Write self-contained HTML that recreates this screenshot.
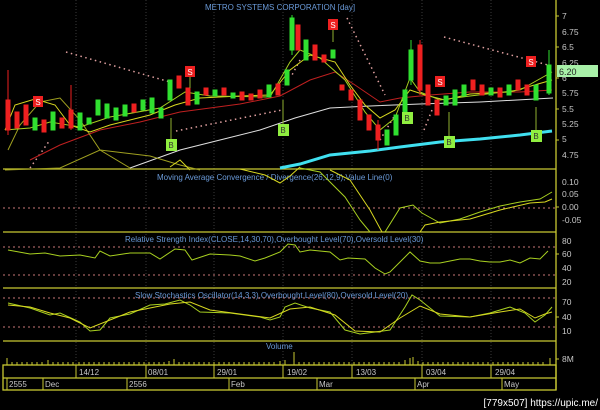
<!DOCTYPE html>
<html><head><style>
html,body{margin:0;padding:0;background:#000;width:600px;height:410px;overflow:hidden}
svg{display:block}
text{font-family:"Liberation Sans",sans-serif}
</style></head><body>
<svg width="600" height="410" viewBox="0 0 600 410" xmlns="http://www.w3.org/2000/svg">
<rect width="600" height="410" fill="#000"/>
<!-- vertical grid -->
<g stroke="#3a3a3a" stroke-width="1" stroke-dasharray="1,2">
<line x1="76" y1="0" x2="76" y2="365"/><line x1="146" y1="0" x2="146" y2="365"/><line x1="214" y1="0" x2="214" y2="365"/><line x1="283" y1="0" x2="283" y2="365"/><line x1="352" y1="0" x2="352" y2="365"/><line x1="422" y1="0" x2="422" y2="365"/><line x1="491" y1="0" x2="491" y2="365"/>
</g>
<!-- panel borders -->
<g stroke="#c8c832" stroke-width="1.3" fill="none">
<line x1="3" y1="169" x2="556" y2="169"/><line x1="3" y1="232" x2="556" y2="232"/><line x1="3" y1="288" x2="556" y2="288"/><line x1="3" y1="341" x2="556" y2="341"/>
<line x1="556" y1="0" x2="556" y2="390"/>
<rect x="3" y="365" width="553" height="25"/>
<line x1="3" y1="378" x2="556" y2="378"/>
</g>
<!-- date dividers -->
<g stroke="#c8c832" stroke-width="1">
<line x1="76" y1="365" x2="76" y2="378"/><line x1="146" y1="365" x2="146" y2="378"/><line x1="214" y1="365" x2="214" y2="378"/><line x1="283" y1="365" x2="283" y2="378"/><line x1="352" y1="365" x2="352" y2="378"/><line x1="422" y1="365" x2="422" y2="378"/><line x1="491" y1="365" x2="491" y2="378"/>
<line x1="7" y1="378" x2="7" y2="390"/><line x1="43" y1="378" x2="43" y2="390"/><line x1="127" y1="378" x2="127" y2="390"/><line x1="229" y1="378" x2="229" y2="390"/><line x1="317" y1="378" x2="317" y2="390"/><line x1="415" y1="378" x2="415" y2="390"/><line x1="502" y1="378" x2="502" y2="390"/>
</g>
<g fill="#c8c8c8" font-size="8">
<text x="79" y="375">14/12</text><text x="148" y="375">08/01</text><text x="217" y="375">29/01</text><text x="287" y="375">19/02</text><text x="356" y="375">13/03</text><text x="426" y="375">03/04</text><text x="495" y="375">29/04</text>
<text x="9" y="387">2555</text><text x="45" y="387">Dec</text><text x="129" y="387">2556</text><text x="231" y="387">Feb</text><text x="319" y="387">Mar</text><text x="417" y="387">Apr</text><text x="504" y="387">May</text>
</g>
<!-- right axis labels -->
<g fill="#c8c8c8" font-size="8.5">
<text x="562" y="19">7</text><text x="562" y="35">6.75</text><text x="562" y="50">6.5</text><text x="562" y="66">6.25</text><text x="562" y="81">6</text><text x="562" y="96">5.75</text><text x="562" y="112">5.5</text><text x="562" y="127">5.25</text><text x="562" y="142">5</text><text x="562" y="158">4.75</text>
<text x="562" y="185">0.10</text><text x="562" y="197">0.05</text><text x="562" y="210">0.00</text><text x="562" y="223">-0.05</text>
<text x="562" y="244">80</text><text x="562" y="257">60</text><text x="562" y="271">40</text><text x="562" y="285">20</text>
<text x="562" y="305">70</text><text x="562" y="320">40</text><text x="562" y="334">10</text>
<text x="562" y="362">8M</text>
</g>
<g stroke="#c8c832"><line x1="556" y1="16" x2="559" y2="16"/><line x1="556" y1="47" x2="559" y2="47"/><line x1="556" y1="78" x2="559" y2="78"/><line x1="556" y1="109" x2="559" y2="109"/><line x1="556" y1="140" x2="559" y2="140"/><line x1="556" y1="207" x2="559" y2="207"/><line x1="556" y1="254" x2="559" y2="254"/><line x1="556" y1="317" x2="559" y2="317"/><line x1="556" y1="359" x2="559" y2="359"/></g>
<rect x="557" y="65" width="41" height="12" fill="#a8f0a8"/>
<text x="559" y="75" font-size="9" fill="#222">6.20</text>
<!-- titles -->
<g fill="#6a9ad8" font-size="8">
<text x="205" y="10">METRO SYSTEMS CORPORATION [day]</text>
<text x="157" y="180">Moving Average Convergence / Divergence(26,12,9),Value Line(0)</text>
<text x="125" y="242">Relative Strength Index(CLOSE,14,30,70),Overbought Level(70),Oversold Level(30)</text>
<text x="135" y="298">Slow Stochastics Oscillator(14,3,3),Overbought Level(80),Oversold Level(20)</text>
<text x="266" y="349">Volume</text>
</g>
<!-- dashed levels -->
<g stroke="#c87878" stroke-dasharray="2,3" stroke-width="1">
<line x1="3" y1="208" x2="556" y2="208"/><line x1="3" y1="247" x2="556" y2="247"/><line x1="3" y1="275" x2="556" y2="275"/><line x1="3" y1="298" x2="556" y2="298"/><line x1="3" y1="327" x2="556" y2="327"/>
</g>
<!-- SAR dots -->
<g stroke="#e0a0a0" stroke-width="1.5" stroke-dasharray="1.5,3.5" fill="none">
<path d="M66 52 L170 82"/><path d="M176 131 L282 110"/><path d="M30 168 L50 140"/><path d="M347 18 L385 95"/><path d="M300 60 L292 75"/><path d="M444 37 L548 65"/><path d="M380 140 L395 115"/><path d="M424 130 L432 110"/>
</g>
<!-- MAs -->
<g fill="none" stroke-width="1">
<path d="M30 160 L60 145 L100 130 L140 122 L180 112 L240 104 L280 96 L310 80 L335 72 L355 85 L380 102 L400 98 L430 95 L470 92 L520 92 L552 90" stroke="#c02020"/>
<path d="M130 168 L180 150 L220 140 L260 130 L295 118 L330 108 L370 106 L420 104 L480 102 L553 98" stroke="#e0e0e0"/>
<path d="M8 150 L20 125 L40 102 L60 98 L80 120 L100 150 L130 168" stroke="#a0a020"/>
<path d="M5 130 L15 105 L35 99 L55 105 L70 125 L90 132 L110 125 L150 115 L175 105 L200 98 L240 96 L270 95 L290 70 L310 55 L335 62 L350 85 L365 105 L380 118 L395 110 L410 90 L425 95 L445 100 L470 94 L510 92 L552 80" stroke="#d8d820"/>
<path d="M5 130 L30 128 L50 122 L80 127 L110 117 L160 108 L185 92 L210 96 L270 97 L290 62 L300 50 L320 58 L345 80 L365 112 L380 130 L395 118 L410 78 L420 92 L440 100 L470 96 L520 90 L552 72" stroke="#a8d020"/>
</g>
<path d="M280 168 L300 164 L330 155 L370 151 L400 147 L440 142 L480 139 L520 135 L552 131" stroke="#40e0f0" stroke-width="3" fill="none"/>
<!-- candles -->
<g stroke-width="1">
<g fill="#ee2020" stroke="#ee2020">
<line x1="8" y1="70" x2="8" y2="135"/><rect x="6" y="100" width="4" height="30"/>
<rect x="15" y="112" width="4" height="16"/><rect x="24" y="105" width="4" height="20"/>
<rect x="42" y="120" width="4" height="12"/><rect x="60" y="118" width="4" height="10"/>
<line x1="71" y1="85" x2="71" y2="130"/><rect x="69" y="110" width="4" height="18"/>
<rect x="132" y="104" width="4" height="8"/><rect x="177" y="76" width="4" height="12"/>
<rect x="186" y="88" width="4" height="17"/><rect x="204" y="88" width="4" height="7"/>
<rect x="222" y="88" width="4" height="7"/><rect x="240" y="92" width="4" height="8"/>
<rect x="249" y="94" width="4" height="6"/><rect x="258" y="90" width="4" height="8"/>
<rect x="276" y="84" width="4" height="11"/><rect x="296" y="25" width="4" height="25"/>
<rect x="313" y="45" width="4" height="15"/><rect x="322" y="55" width="4" height="7"/>
<rect x="340" y="85" width="4" height="5"/><rect x="349" y="90" width="4" height="10"/>
<rect x="358" y="100" width="4" height="20"/><rect x="367" y="115" width="4" height="15"/>
<line x1="378" y1="120" x2="378" y2="150"/><rect x="376" y="125" width="4" height="15"/>
<line x1="420" y1="40" x2="420" y2="95"/><rect x="418" y="45" width="4" height="45"/>
<rect x="426" y="85" width="4" height="20"/><rect x="435" y="100" width="4" height="15"/>
<rect x="471" y="80" width="4" height="10"/><rect x="480" y="85" width="4" height="10"/>
<rect x="498" y="88" width="4" height="9"/><rect x="516" y="80" width="4" height="10"/>
<rect x="525" y="85" width="4" height="10"/>
</g>
<g fill="#30e030" stroke="#30e030">
<rect x="33" y="118" width="4" height="12"/><rect x="51" y="112" width="4" height="18"/>
<rect x="78" y="113" width="4" height="17"/><rect x="87" y="118" width="4" height="6"/>
<rect x="96" y="100" width="4" height="15"/><rect x="105" y="104" width="4" height="14"/>
<rect x="114" y="108" width="4" height="12"/><rect x="123" y="105" width="4" height="11"/>
<rect x="141" y="100" width="4" height="10"/><rect x="150" y="98" width="4" height="15"/>
<rect x="159" y="108" width="4" height="10"/><rect x="168" y="80" width="4" height="20"/>
<rect x="195" y="92" width="4" height="12"/><rect x="213" y="90" width="4" height="6"/>
<rect x="231" y="93" width="4" height="5"/><rect x="267" y="85" width="4" height="12"/>
<rect x="285" y="70" width="4" height="15"/><line x1="292" y1="15" x2="292" y2="55"/><rect x="290" y="18" width="4" height="32"/>
<rect x="304" y="40" width="4" height="20"/><rect x="331" y="50" width="4" height="8"/>
<rect x="385" y="130" width="4" height="15"/><rect x="394" y="115" width="4" height="20"/>
<rect x="403" y="90" width="4" height="25"/><line x1="411" y1="40" x2="411" y2="85"/><rect x="409" y="50" width="4" height="30"/>
<rect x="444" y="96" width="4" height="9"/><rect x="453" y="90" width="4" height="15"/>
<rect x="462" y="85" width="4" height="11"/><rect x="489" y="88" width="4" height="7"/>
<rect x="507" y="85" width="4" height="10"/><rect x="534" y="85" width="4" height="15"/>
<line x1="549" y1="50" x2="549" y2="95"/><rect x="547" y="65" width="4" height="28"/>
</g>
</g>
<!-- signals -->
<g stroke="#90b030" stroke-width="1"><line x1="171" y1="118" x2="171" y2="140"/><line x1="283" y1="100" x2="283" y2="124"/><line x1="449" y1="112" x2="449" y2="136"/><line x1="536" y1="107" x2="536" y2="130"/><line x1="190" y1="77" x2="190" y2="88"/><line x1="333" y1="30" x2="333" y2="42"/></g>
<g font-size="8" text-anchor="middle">
<rect x="33" y="96" width="10" height="11" fill="#ee2020"/><text x="38" y="105" fill="#fff">S</text>
<rect x="185" y="66" width="10" height="11" fill="#ee2020"/><text x="190" y="75" fill="#fff">S</text>
<rect x="328" y="19" width="10" height="11" fill="#ee2020"/><text x="333" y="28" fill="#fff">S</text>
<rect x="435" y="76" width="10" height="11" fill="#ee2020"/><text x="440" y="85" fill="#fff">S</text>
<rect x="526" y="56" width="10" height="11" fill="#ee2020"/><text x="531" y="65" fill="#fff">S</text>
<rect x="166" y="139" width="11" height="12" fill="#90ee40"/><text x="171" y="148" fill="#333">B</text>
<rect x="278" y="124" width="11" height="12" fill="#90ee40"/><text x="283" y="133" fill="#333">B</text>
<rect x="402" y="112" width="11" height="12" fill="#90ee40"/><text x="407" y="121" fill="#333">B</text>
<rect x="444" y="136" width="11" height="12" fill="#90ee40"/><text x="449" y="145" fill="#333">B</text>
<rect x="531" y="130" width="11" height="12" fill="#90ee40"/><text x="536" y="139" fill="#333">B</text>
</g>
<!-- MACD -->
<g fill="none" stroke-width="1">
<path d="M5 170 L60 168 L100 150 L150 156 L180 165 L200 170" stroke="#a0a020"/>
<path d="M170 167 L180 160 L190 170 M240 169 L265 175 L280 183 L290 176 L300 167" stroke="#d8d820"/>
<path d="M300 168 L320 172 L345 197 L360 220 L370 232 M385 232 L400 208 L413 205 L422 213 L440 223 L460 219 L480 212 L500 206 L520 202 L540 199 L552 192" stroke="#a8d020"/>
<path d="M330 170 L350 180 L370 210 L382 232 M420 232 L425 225 L440 222 L470 219 L500 210 L530 203 L545 202 L552 199" stroke="#d8d820"/>
</g>
<!-- RSI -->
<path d="M8 250 L30 254 L45 253 L60 256 L80 255 L95 258 L100 251 L110 256 L130 253 L150 253 L160 259 L175 249 L185 250 L192 260 L210 254 L230 255 L240 256 L255 261 L265 258 L280 252 L288 244 L295 245 L300 252 L310 250 L330 252 L340 260 L348 258 L365 259 L375 268 L385 274 L390 272 L400 262 L410 252 L420 261 L430 263 L440 263 L450 261 L460 259 L470 259 L480 261 L490 262 L500 262 L510 260 L520 263 L530 258 L540 259 L548 251" fill="none" stroke="#a8d020" stroke-width="1"/>
<!-- Stoch -->
<g fill="none" stroke-width="1">
<path d="M8 303 L30 308 L50 315 L60 313 L80 322 L90 331 L100 330 L110 318 L130 314 L150 305 L165 304 L180 300 L190 305 L200 312 L230 313 L260 317 L270 320 L280 317 L285 307 L295 303 L310 308 L330 312 L345 330 L360 334 L390 330 L405 307 L412 295 L420 300 L440 316 L470 317 L490 313 L510 307 L525 313 L535 322 L545 315 L552 307" stroke="#a8d020"/>
<path d="M8 305 L30 307 L50 313 L70 318 L90 328 L110 320 L130 312 L150 308 L170 304 L190 302 L210 310 L240 314 L270 318 L290 309 L310 307 L335 315 L355 331 L380 332 L400 318 L420 306 L440 314 L470 317 L500 312 L520 309 L535 318 L545 314 L552 312" stroke="#d8d820"/>
</g>
<!-- Volume -->
<g stroke="#c8c832" stroke-width="1">
<path d="M7 358V365M12 362V365M17 362V365M22 362V365M27 362V365M32 362V365M37 362V365M42 362V365M48 360V365M53 362V365M58 362V365M63 362V365M68 362V365M73 362V365M79 362V365M84 362V365M89 362V365M94 362V365M99 362V365M104 362V365M109 362V365M114 362V365M119 362V365M124 362V365M129 362V365M134 362V365M139 362V365M144 362V365M149 362V365M154 362V365M159 362V365M164 362V365M169 361V365M174 359V365M179 362V365M184 362V365M189 362V365M194 362V365M199 362V365M204 362V365M209 362V365M214 362V365M219 362V365M224 362V365M229 362V365M234 362V365M239 362V365M244 362V365M249 362V365M254 362V365M259 362V365M264 362V365M269 362V365M274 362V365M280 361V365M285 360V365M294 352V365M299 362V365M304 362V365M309 362V365M314 362V365M319 362V365M324 362V365M329 362V365M334 362V365M339 362V365M344 362V365M349 362V365M354 362V365M359 362V365M364 362V365M369 362V365M374 362V365M379 362V365M384 362V365M389 362V365M394 362V365M399 362V365M405 360V365M410 358V365M413 357V365M418 361V365M423 362V365M428 362V365M433 362V365M438 362V365M443 362V365M448 362V365M453 362V365M458 362V365M463 362V365M468 362V365M473 362V365M478 362V365M483 362V365M488 362V365M493 362V365M498 362V365M503 362V365M508 362V365M513 362V365M518 362V365M523 362V365M528 362V365M533 362V365M538 362V365M543 362V365M550 358V365"/>
</g>
<text x="598" y="406" text-anchor="end" font-size="10" fill="#fff" font-family="Liberation Mono,monospace">[779x507] https://upic.me/</text>
</svg>
</body></html>
